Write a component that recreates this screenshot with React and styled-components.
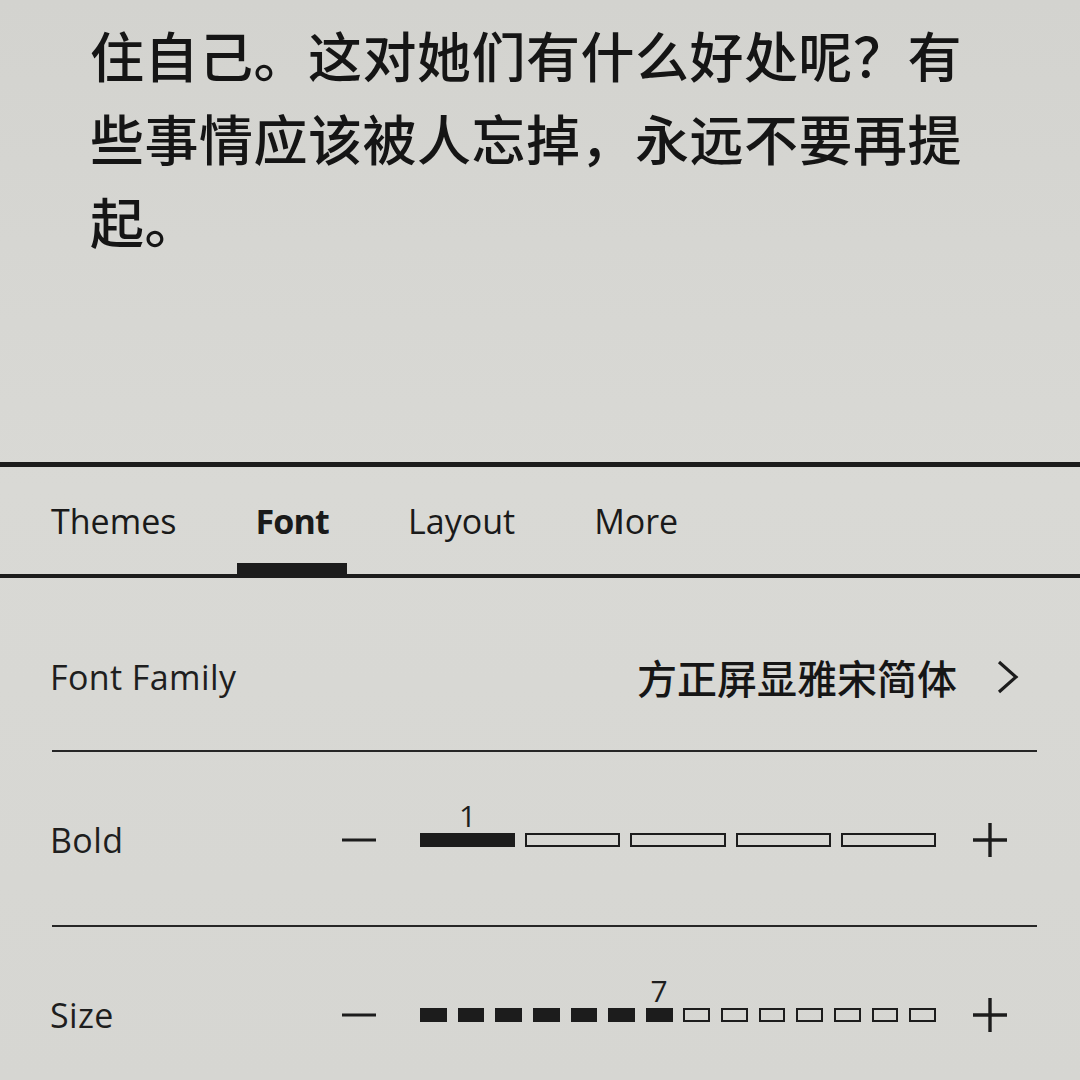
import React from 'react'
import styled, { createGlobalStyle } from 'styled-components'

const GlobalStyle = createGlobalStyle`
    html, body {
        margin: 0;
        padding: 0;
    }

    body {
        width: 1080px;
        height: 1080px;
        overflow: hidden;
        background: #d6d6d2;
        font-family: "Open Sans", "Noto Sans CJK SC", sans-serif;
        color: #1d1d1d;
    }
`

const INK = '#1c1c1c'

const bookText =
    '住自己。这对她们有什么好处呢？有些事情应该被人忘掉，永远不要再提起。'

const tabs = ['Themes', 'Font', 'Layout', 'More']

const MinusIcon = () => (
    <svg width="34" height="40" viewBox="0 0 34 40">
        <line x1="0" y1="20" x2="34" y2="20" stroke={INK} strokeWidth="3" />
    </svg>
)

const PlusIcon = () => (
    <svg width="34" height="40" viewBox="0 0 34 40">
        <line x1="0" y1="20" x2="34" y2="20" stroke={INK} strokeWidth="3.4" />
        <line x1="17" y1="3" x2="17" y2="37" stroke={INK} strokeWidth="3.4" />
    </svg>
)

const ChevronIcon = () => (
    <svg width="26" height="40" viewBox="0 0 26 40">
        <polyline
            points="5,5 22,20 5,35"
            fill="none"
            stroke={INK}
            strokeWidth="3.2"
            strokeLinejoin="miter"
        />
    </svg>
)

const Stepper = ({ count, value, gap }) => (
    <>
        <IconBox $after={44}>
            <MinusIcon />
        </IconBox>
        <Track $gap={gap}>
            {Array.from({ length: count }, (_, i) => (
                <Segment key={i} $filled={i < value}>
                    {i === value - 1 && <ValueTag>{value}</ValueTag>}
                </Segment>
            ))}
        </Track>
        <IconBox $before={37}>
            <PlusIcon />
        </IconBox>
    </>
)

const App = () => {
    return (
        <Screen>
            <GlobalStyle />
            <ReadingPane>
                <BookText>{bookText}</BookText>
            </ReadingPane>

            <TabBar>
                {tabs.map((t) => (
                    <Tab key={t} $active={t === 'Font'}>
                        {t}
                    </Tab>
                ))}
            </TabBar>

            <Panel>
                <SettingRow $top={79} $bottom={53}>
                    <Label>Font Family</Label>
                    <FontValue>方正屏显雅宋简体</FontValue>
                    <IconBox $before={37} $after={17}>
                        <ChevronIcon />
                    </IconBox>
                </SettingRow>

                <SettingRow $top={68} $bottom={65}>
                    <Label>Bold</Label>
                    <Stepper count={5} value={1} gap={10} />
                </SettingRow>

                <SettingRow $top={68} $bottom={40} $last>
                    <Label>Size</Label>
                    <Stepper count={14} value={7} gap={10.8} />
                </SettingRow>
            </Panel>
        </Screen>
    )
}

export default App

const Screen = styled.div`
    width: 1080px;
    height: 1080px;
    overflow: hidden;
    background: linear-gradient(180deg, #d3d3cf 0%, #d9d9d5 45%, #d6d6d2 100%);
`

const ReadingPane = styled.div`
    height: 462px;
    box-sizing: border-box;
    padding: 13px 0 0 90px;
`

const BookText = styled.p`
    margin: 0;
    width: 884px;
    font-family: "Noto Sans CJK SC", "Noto Sans", sans-serif;
    font-size: 54px;
    font-weight: 500;
    line-height: 83px;
    letter-spacing: 0.5px;
    color: #151515;
`

const TabBar = styled.div`
    display: flex;
    height: 107px;
    padding-left: 33px;
    gap: 43px;
    border-top: 5px solid ${INK};
    border-bottom: 4px solid ${INK};
`

const Tab = styled.div`
    display: flex;
    align-items: center;
    padding: 11px 18px 0;
    font-size: 34px;
    font-weight: ${(p) => (p.$active ? 700 : 400)};
    letter-spacing: ${(p) => (p.$active ? '-0.8px' : '0')};
    color: #1a1a1a;
    border-bottom: 11px solid ${(p) => (p.$active ? INK : 'transparent')};
`

const Panel = styled.div`
    margin: 0 43px 0 52px;
`

const SettingRow = styled.div`
    display: flex;
    align-items: center;
    height: 40px;
    padding-top: ${(p) => p.$top}px;
    padding-bottom: ${(p) => p.$bottom}px;
    border-bottom: ${(p) => (p.$last ? 'none' : `2px solid #262626`)};
`

const Label = styled.div`
    flex: 0 0 292px;
    margin-left: -2px;
    font-size: 34px;
    line-height: 40px;
    letter-spacing: 0.4px;
    color: #1e1e1e;
`

const FontValue = styled.div`
    margin-left: auto;
    font-family: "Noto Sans CJK SC", sans-serif;
    font-size: 40px;
    font-weight: 500;
    line-height: 40px;
    color: #161616;
`

const IconBox = styled.div`
    display: flex;
    flex: 0 0 auto;
    margin-left: ${(p) => p.$before || 0}px;
    margin-right: ${(p) => p.$after || 0}px;
`

const Track = styled.div`
    display: flex;
    align-items: center;
    width: 516px;
    gap: ${(p) => p.$gap}px;
`

const Segment = styled.div`
    position: relative;
    flex: 1;
    height: 14px;
    box-sizing: border-box;
    border: 2.5px solid ${INK};
    background: ${(p) => (p.$filled ? INK : 'transparent')};
`

const ValueTag = styled.span`
    position: absolute;
    left: 50%;
    bottom: calc(100% + 4px);
    transform: translateX(-50%);
    font-size: 30px;
    line-height: 30px;
    color: #1e1e1e;
`
